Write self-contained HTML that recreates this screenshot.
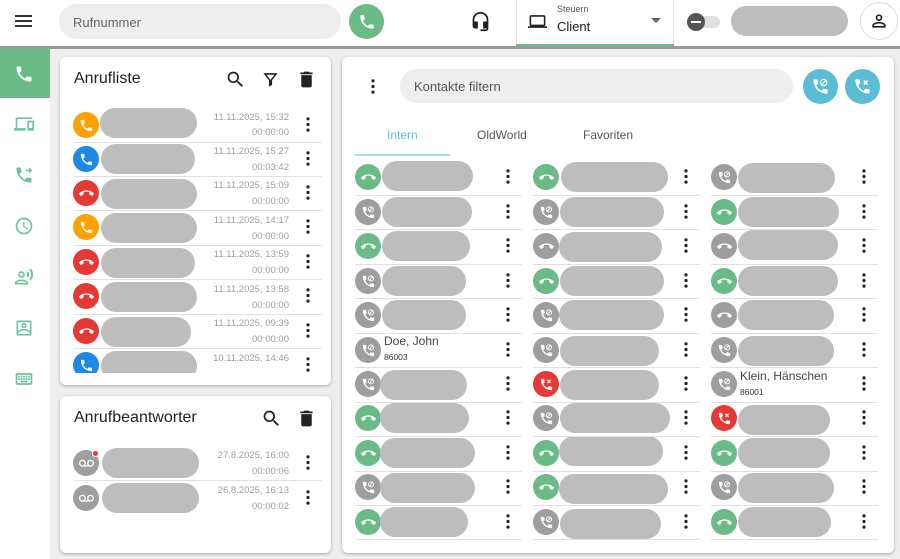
<!DOCTYPE html>
<html><head><meta charset="utf-8"><style>
*{box-sizing:border-box;margin:0;padding:0}
body{width:900px;height:559px;overflow:hidden;background:#eeeeee;font-family:"Liberation Sans",sans-serif;position:relative;color:#333}
.a{position:absolute;white-space:nowrap}
.card{position:absolute;background:#fff;border-radius:6px;box-shadow:0 1px 3px rgba(0,0,0,.3)}
.blob{position:absolute;background:#bdbdbd;border-radius:15px;height:30px}
.ic{position:absolute;width:26px;height:26px;border-radius:50%;display:flex;align-items:center;justify-content:center}
.ic svg{width:15px;height:15px;fill:#fff}
.g{background:#6abb85}.p,.h{background:#9e9e9e}.r{background:#e53935}.o{background:#ffa000}.b{background:#1e88e5}
.keb{position:absolute;width:4px;height:15px}
.sep{position:absolute;height:1px;background:#e0e0e0}
.dt{position:absolute;font-size:9.5px;color:#9e9e9e;text-align:right;width:100px;white-space:nowrap}
.sb svg{position:absolute;width:20px;height:20px;fill:#6cc4a0}
</style></head><body>
<svg width="0" height="0" style="position:absolute">
<defs>
<symbol id="ph" viewBox="0 0 24 24"><path d="M6.62 10.79c1.44 2.83 3.76 5.14 6.59 6.59l2.2-2.2c.27-.27.67-.36 1.02-.24 1.12.37 2.33.57 3.570.57.55 0 1 .45 1 1V20c0 .55-.45 1-1 1-9.39 0-17-7.61-17-17 0-.55.45-1 1-1h3.5c.55 0 1 .45 1 1 0 1.25.2 2.450.57 3.57.11.35.03.74-.25 1.02l-2.2 2.2z"/></symbol>
<symbol id="hu" viewBox="0 0 24 24"><path d="M12 9c-1.6 0-3.15.25-4.6.72v3.1c0 .39-.23.74-.56.9-.98.49-1.87 1.12-2.66 1.850-.18.18-.43.28-.7.28-.28 0-.53-.11-.71-.29L.29 13.08c-.18-.17-.29-.42-.29-.7 0-.28.11-.53.29-.71C3.34 8.78 7.46 7 12 7s8.66 1.78 11.71 4.67c.18.18.29.43.29.71 0 .28-.11.53-.29.71l-2.48 2.48c-.18.18-.43.29-.71.29-.27 0-.52-.11-.7-.28-.79-.74-1.69-1.36-2.67-1.85-.33-.16-.56-.5-.56-.9v-3.1C15.15 9.25 13.6 9 12 9z"/></symbol>
<symbol id="ps" viewBox="0 0 24 24"><path d="M6.62 10.79c1.44 2.83 3.76 5.14 6.59 6.59l2.2-2.2c.27-.27.67-.36 1.02-.24 1.12.37 2.33.57 3.57.57.55 0 1 .45 1 1V20c0 .55-.45 1-1 1-9.39 0-17-7.61-17-17 0-.55.45-1 1-1h3.5c.55 0 1 .45 1 1 0 1.25.2 2.45.57 3.57.11.35.03.74-.25 1.02l-2.2 2.2z"/><circle cx="16" cy="7" r="4" fill="none" stroke="#fff" stroke-width="1.5"/><path d="M13.5 9.5l5-5" stroke="#fff" stroke-width="1.5"/></symbol>
<symbol id="px" viewBox="0 0 24 24"><path d="M6.62 10.79c1.44 2.83 3.76 5.14 6.59 6.59l2.2-2.2c.27-.27.67-.36 1.02-.24 1.12.37 2.33.57 3.57.57.55 0 1 .45 1 1V20c0 .55-.45 1-1 1-9.39 0-17-7.61-17-17 0-.55.45-1 1-1h3.5c.55 0 1 .45 1 1 0 1.25.2 2.45.57 3.57.11.35.03.74-.25 1.02l-2.2 2.2z"/><path d="M13.5 4.5l5 5M18.5 4.5l-5 5" stroke="#fff" stroke-width="2"/></symbol>
<symbol id="kb" viewBox="0 0 4 16"><circle cx="2" cy="2" r="1.7" fill="#222"/><circle cx="2" cy="8" r="1.7" fill="#222"/><circle cx="2" cy="14" r="1.7" fill="#222"/></symbol>
<symbol id="vm" viewBox="0 0 24 24"><path d="M18.5 6C15.46 6 13 8.46 13 11.5c0 1.33.47 2.55 1.26 3.5H9.74c.79-.95 1.26-2.17 1.26-3.5C11 8.46 8.54 6 5.5 6S0 8.46 0 11.5 2.46 17 5.5 17h13c3.04 0 5.5-2.46 5.5-5.5S21.54 6 18.5 6zm-13 9C3.57 15 2 13.43 2 11.5S3.57 8 5.5 8 9 9.57 9 11.5 7.43 15 5.5 15zm13 0c-1.93 0-3.5-1.57-3.5-3.5S16.57 8 18.5 8 22 9.57 22 11.5 20.43 15 18.5 15z"/></symbol>
</defs></svg>

<!-- top bar -->
<div class="a" style="left:0;top:0;width:900px;height:46px;background:#fff"></div>
<div class="a" style="left:0;top:46px;width:900px;height:3px;background:#9a9a9a"></div>
<div class="a" style="left:15px;top:15px;width:17px;height:2px;background:#333;box-shadow:0 5px 0 #333,0 10px 0 #333"></div>
<div class="a" style="left:59px;top:4px;width:282px;height:35px;background:#eee;border-radius:18px;font-size:13px;color:#666;padding:11px 14px">Rufnummer</div>
<div class="ic g" style="left:349px;top:4px;width:35px;height:35px"><svg style="width:18px;height:18px"><use href="#ph"/></svg></div>
<svg class="a" style="left:470px;top:11px;width:21px;height:21px" viewBox="0 0 24 24"><path fill="#222" d="M12 1a9 9 0 0 0-9 9v7c0 1.66 1.34 3 3 3h3v-8H5v-2a7 7 0 0 1 14 0v2h-4v8h4v1h-7v2h6c1.66 0 3-1.34 3-3V10a9 9 0 0 0-9-9z"/></svg>
<div class="a" style="left:516px;top:0;width:158px;height:46px;border-left:1px solid #e0e0e0;border-right:1px solid #e0e0e0"></div>
<div class="a" style="left:516px;top:44px;width:158px;height:2px;background:#6abb85"></div>
<svg class="a" style="left:528px;top:12px;width:19px;height:19px" viewBox="0 0 24 24"><path fill="#222" d="M20 18c1.1 0 1.99-.9 1.99-2L22 6c0-1.1-.9-2-2-2H4c-1.1 0-2 .9-2 2v10c0 1.1.9 2 2 2H0v2h24v-2h-4zM4 6h16v10H4V6z"/></svg>
<div class="a" style="left:557px;top:4px;font-size:9px;color:#555">Steuern</div>
<div class="a" style="left:557px;top:19px;font-size:13px;color:#222">Client</div>
<div class="a" style="left:651px;top:18px;width:0;height:0;border-left:5px solid transparent;border-right:5px solid transparent;border-top:5px solid #666"></div>
<div class="a" style="left:692px;top:16px;width:28px;height:12px;border-radius:6px;background:#e0e0e0"></div>
<div class="a" style="left:687px;top:13px;width:18px;height:18px;border-radius:50%;background:#555"><div style="margin:8px 4px;width:10px;height:2px;background:#fff"></div></div>
<div class="blob" style="left:731px;top:6px;width:117px"></div>
<div class="a" style="left:860px;top:2px;width:38px;height:38px;border-radius:50%;border:1px solid #ddd;background:#fff"></div>
<svg class="a" style="left:869px;top:11px;width:20px;height:20px" viewBox="0 0 24 24"><path fill="#222" d="M12 6a2 2 0 1 1 0 4 2 2 0 0 1 0-4m0 9c2.7 0 5.8 1.29 6 2v1H6v-.99c.2-.72 3.3-2.01 6-2.01M12 4a4 4 0 1 0 0 8 4 4 0 0 0 0-8zm0 9c-2.67 0-8 1.34-8 4v3h16v-3c0-2.66-5.330-4-8-4z"/></svg>

<!-- sidebar -->
<div class="a sb" style="left:0;top:49px;width:50px;height:510px;background:#fff">
<div class="a" style="left:0;top:0;width:50px;height:49px;background:#6abb85"></div>
<svg style="left:14px;top:15px;fill:#fff"><use href="#ph"/></svg>
<svg style="left:14px;top:65px" viewBox="0 0 24 24"><path d="M4 6h18V4H4c-1.1 0-2 .9-2 2v11H0v3h14v-3H4V6zm19 2h-6c-.55 0-1 .45-1 1v10c0 .55.45 1 1 1h6c.55 0 1-.45 1-1V9c0-.55-.45-1-1-1zm-1 9h-4v-7h4v7z"/></svg>
<svg style="left:14px;top:116px" viewBox="0 0 24 24"><path d="M6.62 10.79c1.44 2.83 3.76 5.14 6.59 6.59l2.2-2.2c.27-.27.67-.36 1.02-.24 1.12.37 2.33.57 3.57.57.55 0 1 .45 1 1V20c0 .55-.45 1-1 1-9.39 0-17-7.61-17-17 0-.55.45-1 1-1h3.5c.55 0 1 .45 1 1 0 1.25.2 2.45.57 3.57.11.35.03.74-.25 1.02l-2.2 2.2zM18 3l4 3.5L18 10V7.5h-4v-2h4z"/></svg>
<svg style="left:14px;top:167px" viewBox="0 0 24 24"><path d="M12 2a10 10 0 1 0 0 20 10 10 0 0 0 0-20zm0 18a8 8 0 1 1 0-16 8 8 0 0 1 0 16zm.5-13H11v6l5.2 3.2.8-1.2-4.5-2.7z"/></svg>
<svg style="left:14px;top:218px" viewBox="0 0 24 24"><path d="M9 13a4 4 0 1 0 0-8 4 4 0 0 0 0 8zm0-6a2 2 0 1 1 0 4 2 2 0 0 1 0-4zm0 8c-2.67 0-8 1.34-8 4v2h16v-2c0-2.66-5.33-4-8-4zm-6 4c.22-.72 3.31-2 6-2s5.8 1.29 6 2H3zM15.08 7.05c.84 1.18.84 2.710 0 3.89l1.68 1.69c2.02-2.02 2.02-5.07 0-7.27l-1.68 1.69zM20.07 2l-1.63 1.63c2.77 3.02 2.77 7.56 0 10.74L20.07 16c3.9-3.89 3.91-9.95 0-14z"/></svg>
<svg style="left:14px;top:269px" viewBox="0 0 24 24"><path d="M19 3H5c-1.1 0-2 .9-2 2v14c0 1.1.9 2 2 2h14c1.1 0 2-.9 2-2V5c0-1.1-.9-2-2-2zm0 16H5v-1c1.5-2 4.5-3 7-3s5.5 1 7 3v1zm0-3.4C17.4 14 14.7 13 12 13s-5.4 1-7 2.6V5h14v10.6zM12 12a3 3 0 1 0 0-6 3 3 0 0 0 0 6zm0-4a1 1 0 1 1 0 2 1 1 0 0 1 0-2z"/></svg>
<svg style="left:14px;top:320px" viewBox="0 0 24 24"><path d="M20 5H4c-1.1 0-2 .9-2 2v10c0 1.1.9 2 2 2h16c1.1 0 2-.9 2-2V7c0-1.1-.9-2-2-2zm0 12H4V7h16v10zM11 8h2v2h-2zm0 3h2v2h-2zM8 8h2v2H8zm0 3h2v2H8zm-3 0h2v2H5zm0-3h2v2H5zm3 6h8v2H8zm6-3h2v2h-2zm0-3h2v2h-2zm3 3h2v2h-2zm0-3h2v2h-2z"/></svg>
</div>

<!-- Anrufliste -->
<div class="card" style="left:60px;top:57px;width:271px;height:328px;overflow:hidden">
<div class="a" style="left:14px;top:13px;font-size:16px;color:#222">Anrufliste</div>
<svg class="a" style="left:165px;top:12px;width:21px;height:21px" viewBox="0 0 24 24"><path fill="#222" d="M15.5 14h-.79l-.28-.27A6.47 6.47 0 0 0 16 9.5 6.5 6.5 0 1 0 9.5 16c1.61 0 3.09-.59 4.23-1.57l.27.28v.79l5 4.99L20.49 19l-4.99-5zm-6 0C7.01 14 5 11.99 5 9.5S7.01 5 9.5 5 14 7.01 14 9.5 11.99 14 9.5 14z"/></svg>
<svg class="a" style="left:201px;top:13px;width:19px;height:19px" viewBox="0 0 24 24"><path fill="#222" d="M3 4h18l-7 9v6l-4 2v-8zm4 2 5 6.5V17l0 0 0-4.5L17 6z"/></svg>
<svg class="a" style="left:236px;top:12px;width:21px;height:21px" viewBox="0 0 24 24"><path fill="#222" d="M6 19c0 1.1.9 2 2 2h8c1.1 0 2-.9 2-2V7H6v12zM19 4h-3.5l-1-1h-5l-1 1H5v2h14V4z"/></svg>
</div>
<div class="a" style="left:0;top:0">
<div class="ic o" style="left:73px;top:112px"><svg><use href="#ph"/></svg></div>
<div class="ic b" style="left:73px;top:146px"><svg><use href="#ph"/></svg></div>
<div class="ic r" style="left:73px;top:180px"><svg><use href="#hu"/></svg></div>
<div class="ic o" style="left:73px;top:214px"><svg><use href="#ph"/></svg></div>
<div class="ic r" style="left:73px;top:249px"><svg><use href="#hu"/></svg></div>
<div class="ic r" style="left:73px;top:283px"><svg><use href="#hu"/></svg></div>
<div class="ic r" style="left:73px;top:318px"><svg><use href="#hu"/></svg></div>
<div class="ic b" style="left:73px;top:352px"><svg><use href="#ph"/></svg></div>
<div class="blob" style="left:100px;top:108px;width:97px"></div>
<div class="blob" style="left:101px;top:144px;width:94px"></div>
<div class="blob" style="left:101px;top:179px;width:96px"></div>
<div class="blob" style="left:101px;top:213px;width:96px"></div>
<div class="blob" style="left:101px;top:248px;width:94px"></div>
<div class="blob" style="left:101px;top:282px;width:96px"></div>
<div class="blob" style="left:101px;top:317px;width:90px"></div>
<div class="blob" style="left:101px;top:351px;width:96px"></div>
</div>
<div class="dt" style="left:189px;top:112px">11.11.2025, 15:32</div><div class="dt" style="left:189px;top:127px">00:00:00</div>
<div class="dt" style="left:189px;top:146px">11.11.2025, 15:27</div><div class="dt" style="left:189px;top:162px">00:03:42</div>
<div class="dt" style="left:189px;top:180px">11.11.2025, 15:09</div><div class="dt" style="left:189px;top:196px">00:00:00</div>
<div class="dt" style="left:189px;top:215px">11.11.2025, 14:17</div><div class="dt" style="left:189px;top:231px">00:00:00</div>
<div class="dt" style="left:189px;top:249px">11.11.2025, 13:59</div><div class="dt" style="left:189px;top:265px">00:00:00</div>
<div class="dt" style="left:189px;top:284px">11.11.2025, 13:58</div><div class="dt" style="left:189px;top:300px">00:00:00</div>
<div class="dt" style="left:189px;top:318px">11.11.2025, 09:39</div><div class="dt" style="left:189px;top:334px">00:00:00</div>
<div class="dt" style="left:189px;top:353px">10.11.2025, 14:46</div>
<svg class="keb" style="left:306px;top:117px"><use href="#kb"/></svg>
<svg class="keb" style="left:306px;top:151px"><use href="#kb"/></svg>
<svg class="keb" style="left:306px;top:185px"><use href="#kb"/></svg>
<svg class="keb" style="left:306px;top:219px"><use href="#kb"/></svg>
<svg class="keb" style="left:306px;top:254px"><use href="#kb"/></svg>
<svg class="keb" style="left:306px;top:288px"><use href="#kb"/></svg>
<svg class="keb" style="left:306px;top:323px"><use href="#kb"/></svg>
<svg class="keb" style="left:306px;top:357px"><use href="#kb"/></svg>
<div class="sep" style="left:74px;top:142px;width:248px"></div>
<div class="sep" style="left:74px;top:176px;width:248px"></div>
<div class="sep" style="left:74px;top:210px;width:248px"></div>
<div class="sep" style="left:74px;top:245px;width:248px"></div>
<div class="sep" style="left:74px;top:279px;width:248px"></div>
<div class="sep" style="left:74px;top:314px;width:248px"></div>
<div class="sep" style="left:74px;top:348px;width:248px"></div>
<div class="a" style="left:60px;top:373px;width:271px;height:12px;background:#fff;border-radius:0 0 6px 6px"></div>

<!-- Anrufbeantworter -->
<div class="card" style="left:60px;top:396px;width:271px;height:157px">
<div class="a" style="left:14px;top:13px;font-size:16px;color:#222">Anrufbeantworter</div>
<svg class="a" style="left:201px;top:12px;width:21px;height:21px" viewBox="0 0 24 24"><path fill="#222" d="M15.5 14h-.79l-.28-.27A6.47 6.47 0 0 0 16 9.5 6.5 6.5 0 1 0 9.5 16c1.61 0 3.09-.59 4.23-1.57l.27.28v.79l5 4.99L20.49 19l-4.99-5zm-6 0C7.01 14 5 11.99 5 9.5S7.01 5 9.5 5 14 7.01 14 9.5 11.99 14 9.5 14z"/></svg>
<svg class="a" style="left:236px;top:12px;width:21px;height:21px" viewBox="0 0 24 24"><path fill="#222" d="M6 19c0 1.1.9 2 2 2h8c1.1 0 2-.9 2-2V7H6v12zM19 4h-3.5l-1-1h-5l-1 1H5v2h14V4z"/></svg>
</div>
<div class="ic p" style="left:73px;top:450px"><svg><use href="#vm"/></svg></div>
<div class="a" style="left:92px;top:450px;width:7px;height:7px;border-radius:50%;background:#e53935;border:1px solid #fff"></div>
<div class="ic p" style="left:73px;top:485px"><svg><use href="#vm"/></svg></div>
<div class="blob" style="left:102px;top:448px;width:97px"></div>
<div class="blob" style="left:102px;top:483px;width:97px"></div>
<div class="dt" style="left:189px;top:450px">27.8.2025, 16:00</div><div class="dt" style="left:189px;top:466px">00:00:06</div>
<div class="dt" style="left:189px;top:485px">26.8.2025, 16:13</div><div class="dt" style="left:189px;top:501px">00:00:02</div>
<svg class="keb" style="left:306px;top:455px"><use href="#kb"/></svg>
<svg class="keb" style="left:306px;top:490px"><use href="#kb"/></svg>
<div class="sep" style="left:74px;top:480px;width:248px"></div>

<!-- Contacts -->
<div class="card" style="left:342px;top:57px;width:552px;height:496px"></div>
<svg class="keb" style="left:371px;top:79px"><use href="#kb"/></svg>
<div class="a" style="left:400px;top:69px;width:393px;height:34px;background:#eee;border-radius:17px;font-size:13px;color:#555;padding:10px 14px">Kontakte filtern</div>
<div class="ic" style="left:803px;top:69px;width:35px;height:35px;background:#5bbcd6"><svg style="width:19px;height:19px"><use href="#ps"/></svg></div>
<div class="ic" style="left:845px;top:69px;width:35px;height:35px;background:#5bbcd6"><svg style="width:19px;height:19px"><use href="#px"/></svg></div>
<div class="a" style="left:387px;top:128px;font-size:12px;color:#5bbcd6">Intern</div>
<div class="a" style="left:477px;top:128px;font-size:12px;color:#555">OldWorld</div>
<div class="a" style="left:583px;top:128px;font-size:12px;color:#555">Favoriten</div>
<div class="a" style="left:355px;top:154px;width:95px;height:2px;background:#a8dbe8"></div>

<div class="a" style="left:0;top:0">
<div class="ic g" style="left:355px;top:164px"><svg><use href="#hu"/></svg></div>
<div class="ic p" style="left:355px;top:199px"><svg><use href="#ps"/></svg></div>
<div class="ic g" style="left:355px;top:233px"><svg><use href="#hu"/></svg></div>
<div class="ic p" style="left:355px;top:268px"><svg><use href="#ps"/></svg></div>
<div class="ic p" style="left:355px;top:302px"><svg><use href="#ps"/></svg></div>
<div class="ic p" style="left:355px;top:337px"><svg><use href="#ps"/></svg></div>
<div class="ic p" style="left:355px;top:371px"><svg><use href="#ps"/></svg></div>
<div class="ic g" style="left:355px;top:405px"><svg><use href="#hu"/></svg></div>
<div class="ic g" style="left:355px;top:440px"><svg><use href="#hu"/></svg></div>
<div class="ic p" style="left:355px;top:474px"><svg><use href="#ps"/></svg></div>
<div class="ic g" style="left:355px;top:509px"><svg><use href="#hu"/></svg></div>
<div class="blob" style="left:382px;top:161px;width:91px"></div>
<div class="blob" style="left:382px;top:197px;width:90px"></div>
<div class="blob" style="left:382px;top:231px;width:88px"></div>
<div class="blob" style="left:382px;top:266px;width:84px"></div>
<div class="blob" style="left:382px;top:300px;width:84px"></div>
<div class="a" style="left:384px;top:334px;font-size:12px;color:#444">Doe, John</div>
<div class="a" style="left:384px;top:352px;font-size:8.5px;color:#333">86003</div>
<div class="blob" style="left:380px;top:370px;width:87px"></div>
<div class="blob" style="left:380px;top:403px;width:89px"></div>
<div class="blob" style="left:380px;top:438px;width:95px"></div>
<div class="blob" style="left:380px;top:473px;width:95px"></div>
<div class="blob" style="left:380px;top:507px;width:88px"></div>
<div class="ic g" style="left:533px;top:164px"><svg><use href="#hu"/></svg></div>
<div class="ic p" style="left:533px;top:199px"><svg><use href="#ps"/></svg></div>
<div class="ic h" style="left:533px;top:233px"><svg><use href="#hu"/></svg></div>
<div class="ic g" style="left:533px;top:268px"><svg><use href="#hu"/></svg></div>
<div class="ic p" style="left:533px;top:302px"><svg><use href="#ps"/></svg></div>
<div class="ic p" style="left:533px;top:337px"><svg><use href="#ps"/></svg></div>
<div class="ic r" style="left:533px;top:371px"><svg><use href="#px"/></svg></div>
<div class="ic p" style="left:533px;top:405px"><svg><use href="#ps"/></svg></div>
<div class="ic g" style="left:533px;top:440px"><svg><use href="#hu"/></svg></div>
<div class="ic g" style="left:533px;top:474px"><svg><use href="#hu"/></svg></div>
<div class="ic p" style="left:533px;top:509px"><svg><use href="#ps"/></svg></div>
<div class="blob" style="left:561px;top:162px;width:107px"></div>
<div class="blob" style="left:560px;top:197px;width:104px"></div>
<div class="blob" style="left:559px;top:232px;width:103px"></div>
<div class="blob" style="left:560px;top:266px;width:104px"></div>
<div class="blob" style="left:559px;top:300px;width:105px"></div>
<div class="blob" style="left:560px;top:336px;width:99px"></div>
<div class="blob" style="left:560px;top:370px;width:99px"></div>
<div class="blob" style="left:560px;top:403px;width:110px"></div>
<div class="blob" style="left:559px;top:436px;width:104px"></div>
<div class="blob" style="left:559px;top:474px;width:109px"></div>
<div class="blob" style="left:560px;top:509px;width:101px"></div>
<div class="ic p" style="left:711px;top:164px"><svg><use href="#ps"/></svg></div>
<div class="ic g" style="left:711px;top:199px"><svg><use href="#hu"/></svg></div>
<div class="ic h" style="left:711px;top:233px"><svg><use href="#hu"/></svg></div>
<div class="ic g" style="left:711px;top:268px"><svg><use href="#hu"/></svg></div>
<div class="ic h" style="left:711px;top:302px"><svg><use href="#hu"/></svg></div>
<div class="ic p" style="left:711px;top:337px"><svg><use href="#ps"/></svg></div>
<div class="ic p" style="left:711px;top:371px"><svg><use href="#ps"/></svg></div>
<div class="ic r" style="left:711px;top:405px"><svg><use href="#px"/></svg></div>
<div class="ic g" style="left:711px;top:440px"><svg><use href="#hu"/></svg></div>
<div class="ic p" style="left:711px;top:474px"><svg><use href="#ps"/></svg></div>
<div class="ic g" style="left:711px;top:509px"><svg><use href="#hu"/></svg></div>
<div class="blob" style="left:738px;top:163px;width:97px"></div>
<div class="blob" style="left:738px;top:197px;width:101px"></div>
<div class="blob" style="left:738px;top:230px;width:100px"></div>
<div class="blob" style="left:738px;top:266px;width:100px"></div>
<div class="blob" style="left:738px;top:300px;width:96px"></div>
<div class="blob" style="left:738px;top:336px;width:96px"></div>
<div class="a" style="left:740px;top:369px;font-size:12px;color:#444">Klein, Hänschen</div>
<div class="a" style="left:740px;top:387px;font-size:8.5px;color:#333">86001</div>
<div class="blob" style="left:738px;top:405px;width:92px"></div>
<div class="blob" style="left:738px;top:438px;width:92px"></div>
<div class="blob" style="left:738px;top:473px;width:96px"></div>
<div class="blob" style="left:738px;top:507px;width:93px"></div>
</div>

<div class="a" style="left:0;top:0">
<svg class="keb" style="left:506px;top:169px"><use href="#kb"/></svg><svg class="keb" style="left:684px;top:169px"><use href="#kb"/></svg><svg class="keb" style="left:862px;top:169px"><use href="#kb"/></svg>
<svg class="keb" style="left:506px;top:204px"><use href="#kb"/></svg><svg class="keb" style="left:684px;top:204px"><use href="#kb"/></svg><svg class="keb" style="left:862px;top:204px"><use href="#kb"/></svg>
<svg class="keb" style="left:506px;top:238px"><use href="#kb"/></svg><svg class="keb" style="left:684px;top:238px"><use href="#kb"/></svg><svg class="keb" style="left:862px;top:238px"><use href="#kb"/></svg>
<svg class="keb" style="left:506px;top:273px"><use href="#kb"/></svg><svg class="keb" style="left:684px;top:273px"><use href="#kb"/></svg><svg class="keb" style="left:862px;top:273px"><use href="#kb"/></svg>
<svg class="keb" style="left:506px;top:307px"><use href="#kb"/></svg><svg class="keb" style="left:684px;top:307px"><use href="#kb"/></svg><svg class="keb" style="left:862px;top:307px"><use href="#kb"/></svg>
<svg class="keb" style="left:506px;top:342px"><use href="#kb"/></svg><svg class="keb" style="left:684px;top:342px"><use href="#kb"/></svg><svg class="keb" style="left:862px;top:342px"><use href="#kb"/></svg>
<svg class="keb" style="left:506px;top:376px"><use href="#kb"/></svg><svg class="keb" style="left:684px;top:376px"><use href="#kb"/></svg><svg class="keb" style="left:862px;top:376px"><use href="#kb"/></svg>
<svg class="keb" style="left:506px;top:410px"><use href="#kb"/></svg><svg class="keb" style="left:684px;top:410px"><use href="#kb"/></svg><svg class="keb" style="left:862px;top:410px"><use href="#kb"/></svg>
<svg class="keb" style="left:506px;top:445px"><use href="#kb"/></svg><svg class="keb" style="left:684px;top:445px"><use href="#kb"/></svg><svg class="keb" style="left:862px;top:445px"><use href="#kb"/></svg>
<svg class="keb" style="left:506px;top:479px"><use href="#kb"/></svg><svg class="keb" style="left:684px;top:479px"><use href="#kb"/></svg><svg class="keb" style="left:862px;top:479px"><use href="#kb"/></svg>
<svg class="keb" style="left:506px;top:514px"><use href="#kb"/></svg><svg class="keb" style="left:684px;top:514px"><use href="#kb"/></svg><svg class="keb" style="left:862px;top:514px"><use href="#kb"/></svg>
</div>
<div class="sep" style="left:355px;top:195px;width:167px;box-shadow:178px 0 #e0e0e0,356px 0 #e0e0e0,0 34px #e0e0e0,178px 34px #e0e0e0,356px 34px #e0e0e0,0 69px #e0e0e0,178px 69px #e0e0e0,356px 69px #e0e0e0,0 103px #e0e0e0,178px 103px #e0e0e0,356px 103px #e0e0e0,0 138px #e0e0e0,178px 138px #e0e0e0,356px 138px #e0e0e0,0 172px #e0e0e0,178px 172px #e0e0e0,356px 172px #e0e0e0,0 207px #e0e0e0,178px 207px #e0e0e0,356px 207px #e0e0e0,0 241px #e0e0e0,178px 241px #e0e0e0,356px 241px #e0e0e0,0 276px #e0e0e0,178px 276px #e0e0e0,356px 276px #e0e0e0,0 310px #e0e0e0,178px 310px #e0e0e0,356px 310px #e0e0e0,0 344px #e0e0e0,178px 344px #e0e0e0,356px 344px #e0e0e0"></div>
</body></html>
